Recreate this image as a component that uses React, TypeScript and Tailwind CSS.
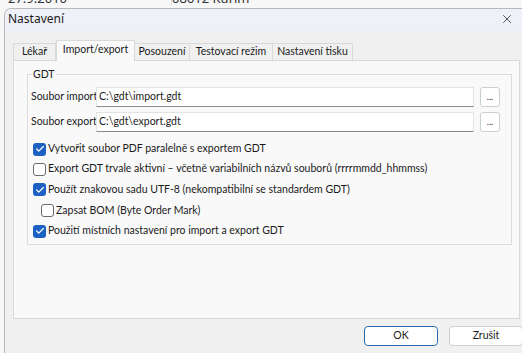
import { X, Check } from 'lucide-react';

const font = { fontFamily: 'Lato, "Noto Sans", sans-serif' };
const titleFont = { fontFamily: '"Noto Sans", "Open Sans", sans-serif' };

function Box({ checked }: { checked: boolean }) {
  return checked ? (
    <span className="flex items-center justify-center w-[13px] h-[13px] rounded-[3px] bg-[#1d62c2] shrink-0">
      <Check className="w-[10px] h-[10px] text-white" strokeWidth={3} />
    </span>
  ) : (
    <span className="w-[13px] h-[13px] rounded-[3px] border border-[#6b6b6b] bg-white shrink-0" />
  );
}

function CheckRow({ label, checked, indent, h }: { label: string; checked: boolean; indent?: boolean; h: string }) {
  return (
    <div className={`flex items-center gap-[2px] ${h} ${indent ? 'pl-[13px]' : 'pl-[5px]'}`}>
      <Box checked={checked} />
      <span className="whitespace-nowrap">{label}</span>
    </div>
  );
}

function FileRow({ label, value }: { label: string; value: string }) {
  return (
    <div className="flex items-center h-[20px]">
      <span className="w-[68px] pl-[3px] overflow-hidden whitespace-nowrap shrink-0">{label}</span>
      <div className="w-[378px] h-[20px] bg-white border border-[#e3e3e3] border-b-[#8a8a8a] flex items-center pl-[2px]">
        {value}
      </div>
      <button className="ml-[6px] w-[20px] h-[20px] bg-white border border-[#cfcfcf] rounded-[3px] flex items-end justify-center pb-[5px] text-[9px] leading-none">
        ...
      </button>
    </div>
  );
}

export default function App() {
  const tabs = ['Lékař', 'Import/export', 'Posouzení', 'Testovací režim', 'Nastavení tisku'];
  const widths = ['w-[43px]', 'w-[79px]', 'w-[55px]', 'w-[83px]', 'w-[80px]'];

  return (
    <div className="w-[522px] h-[353px] overflow-hidden bg-[#f7f7f7] flex flex-col text-[10.5px] text-[#1b1b1b]" style={font}>
      {/* okno v pozadí */}
      <div className="h-[8px] overflow-hidden shrink-0" style={titleFont}>
        <div className="flex -mt-[9px] leading-[14px] text-[13px] text-[#333]">
          <span className="pl-[8px] w-[172px]">27.9.2010</span>
          <span className="border-l border-[#dedede] h-[14px] -ml-[1px]" />
          <span>08612 Kuřim</span>
        </div>
      </div>

      {/* dialog */}
      <div className="ml-[4px] flex-1 flex flex-col bg-[#f0f0f0] border-l border-t border-[#b9b9b9] rounded-tl-[7px] overflow-hidden">
        <div className="h-[22px] bg-[#eef1f8] flex items-center justify-between pl-[3px] pr-[8px] pb-[2px] shrink-0 text-[12px]" style={titleFont}>
          <span>Nastavení</span>
          <X className="w-[14px] h-[14px] text-[#222]" strokeWidth={1.3} />
        </div>

        <div className="pl-[8px] pt-[9px]">
          {/* záložky */}
          <div className="flex items-end h-[20px]">
            {tabs.map((t, i) =>
              i === 1 ? (
                <div
                  key={t}
                  className={`${widths[i]} h-[21px] -mb-px relative z-10 bg-[#f9f9f9] border border-b-0 border-[#d9d9d9] flex items-center justify-center pb-[2px] whitespace-nowrap`}
                >
                  {t}
                </div>
              ) : (
                <div
                  key={t}
                  className={`${widths[i]} h-[17px] border border-b-0 border-[#d9d9d9] ${i === 0 ? '' : 'border-l-0'} flex items-center justify-center whitespace-nowrap`}
                >
                  {t}
                </div>
              )
            )}
          </div>

          {/* panel */}
          <div className="w-[507px] h-[259px] bg-[#f9f9f9] border border-[#d9d9d9] pl-[13px] pt-[13px]">
            <div className="relative w-[485px] h-[171px] border border-[#dcdcdc] pt-[12px]">
              <span className="absolute -top-[9px] left-[4px] bg-[#f9f9f9] px-[1px] leading-[16px]">GDT</span>
              <div className="flex flex-col gap-[5px]">
                <FileRow label="Soubor import" value="C:\gdt\import.gdt" />
                <FileRow label="Soubor exportu" value="C:\gdt\export.gdt" />
              </div>
              <div className="mt-[7px] flex flex-col">
                <CheckRow h="h-[20px]" checked label="Vytvořit soubor PDF paralelně s exportem GDT" />
                <CheckRow h="h-[20px]" checked={false} label="Export GDT trvale aktivní – včetně variabilních názvů souborů (rrrrmmdd_hhmmss)" />
                <CheckRow h="h-[21px]" checked label="Použít znakovou sadu UTF-8 (nekompatibilní se standardem GDT)" />
                <CheckRow h="h-[21px]" checked={false} indent label="Zapsat BOM (Byte Order Mark)" />
                <CheckRow h="h-[20px]" checked label="Použití místních nastavení pro import a export GDT" />
              </div>
            </div>
          </div>

          {/* tlačítka */}
          <div className="flex gap-[11px] pt-[7px] pl-[351px]">
            <button className="w-[74px] h-[20px] shrink-0 bg-white border border-[#2a6db3] rounded-[4px]">OK</button>
            <button className="w-[74px] h-[20px] shrink-0 bg-white border border-[#cfcfcf] rounded-[4px]">Zrušit</button>
          </div>
        </div>
      </div>
    </div>
  );
}
